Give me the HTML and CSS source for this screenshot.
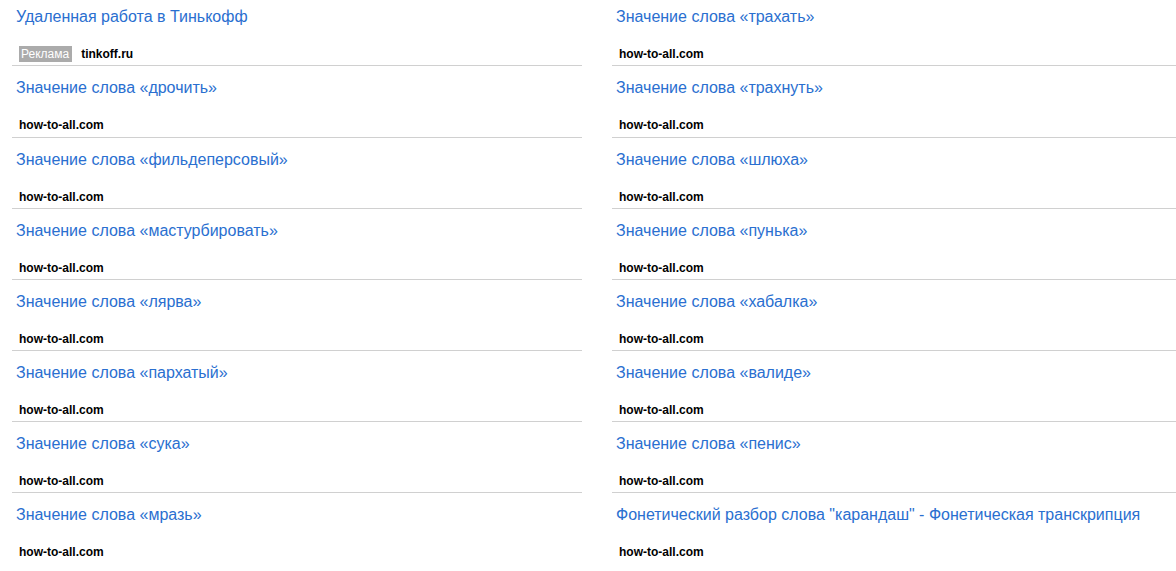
FILE: index.html
```html
<!DOCTYPE html>
<html lang="ru">
<head>
<meta charset="utf-8">
<link rel="stylesheet" href="styles.css">
</head>
<body>
<div class="grid">
  <div class="col">
    <div class="item">
      <a class="title" href="#">Удаленная работа в Тинькофф</a>
      <div class="meta"><span class="badge">Реклама</span><span class="domain">tinkoff.ru</span></div>
    </div>
    <div class="item"><a class="title" href="#">Значение слова «дрочить»</a><div class="meta"><span class="domain">how-to-all.com</span></div></div>
    <div class="item"><a class="title" href="#">Значение слова «фильдеперсовый»</a><div class="meta"><span class="domain">how-to-all.com</span></div></div>
    <div class="item"><a class="title" href="#">Значение слова «мастурбировать»</a><div class="meta"><span class="domain">how-to-all.com</span></div></div>
    <div class="item"><a class="title" href="#">Значение слова «лярва»</a><div class="meta"><span class="domain">how-to-all.com</span></div></div>
    <div class="item"><a class="title" href="#">Значение слова «пархатый»</a><div class="meta"><span class="domain">how-to-all.com</span></div></div>
    <div class="item"><a class="title" href="#">Значение слова «сука»</a><div class="meta"><span class="domain">how-to-all.com</span></div></div>
    <div class="item last"><a class="title" href="#">Значение слова «мразь»</a><div class="meta"><span class="domain">how-to-all.com</span></div></div>
  </div>
  <div class="col">
    <div class="item"><a class="title" href="#">Значение слова «трахать»</a><div class="meta"><span class="domain">how-to-all.com</span></div></div>
    <div class="item"><a class="title" href="#">Значение слова «трахнуть»</a><div class="meta"><span class="domain">how-to-all.com</span></div></div>
    <div class="item"><a class="title" href="#">Значение слова «шлюха»</a><div class="meta"><span class="domain">how-to-all.com</span></div></div>
    <div class="item"><a class="title" href="#">Значение слова «пунька»</a><div class="meta"><span class="domain">how-to-all.com</span></div></div>
    <div class="item"><a class="title" href="#">Значение слова «хабалка»</a><div class="meta"><span class="domain">how-to-all.com</span></div></div>
    <div class="item"><a class="title" href="#">Значение слова «валиде»</a><div class="meta"><span class="domain">how-to-all.com</span></div></div>
    <div class="item"><a class="title" href="#">Значение слова «пенис»</a><div class="meta"><span class="domain">how-to-all.com</span></div></div>
    <div class="item last"><a class="title" href="#">Фонетический разбор слова "карандаш" - Фонетическая транскрипция</a><div class="meta"><span class="domain">how-to-all.com</span></div></div>
  </div>
</div>
</body>
</html>
```

FILE: styles.css
```css
html, body {
  margin: 0;
  padding: 0;
  background: #fff;
  overflow: hidden;
}
body {
  font-family: Arial, "Liberation Sans", sans-serif;
  width: 1176px;
  height: 571px;
}
.grid {
  display: grid;
  grid-template-columns: 570px 1fr;
  column-gap: 30px;
  padding-left: 12px;
  margin-top: -4.65px;
}
.col {
  display: flex;
  flex-direction: column;
}
.item {
  display: flex;
  flex-direction: column;
  align-items: flex-start;
  padding: 13px 0 4.1px 0;
  border-bottom: 1px solid #d0d0d0;
}
.item.last {
  border-bottom: none;
}
.title {
  display: block;
  font-size: 16px;
  line-height: 18px;
  color: #2a6fd0;
  text-decoration: none;
  padding-left: 4px;
  white-space: nowrap;
}
.meta {
  display: flex;
  align-items: center;
  margin-top: 21px;
  padding-left: 7px;
  height: 14px;
}
.badge {
  display: inline-block;
  background: #ababab;
  color: #fff;
  font-size: 12px;
  line-height: 16px;
  padding: 0 3px 0 2px;
  margin-right: 9px;
}
.domain {
  font-size: 12px;
  line-height: 14px;
  font-weight: bold;
  color: #000;
}
```
